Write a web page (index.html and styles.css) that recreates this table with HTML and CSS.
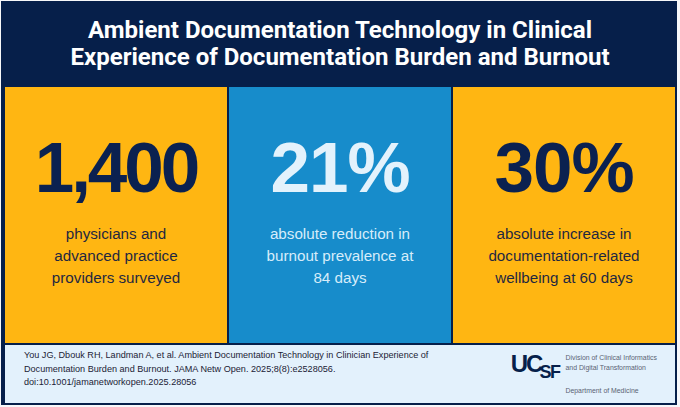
FILE: index.html
```html
<!DOCTYPE html>
<html lang="en">
<head>
<meta charset="utf-8">
<title>Ambient Documentation Technology</title>
<link rel="stylesheet" href="styles.css">
</head>
<body>
<div class="frame">
  <header class="header">
    <h1 class="title">Ambient Documentation Technology in Clinical<br>Experience of Documentation Burden and Burnout</h1>
  </header>
  <section class="panels">
    <div class="panel panel-gold">
      <div class="stat stat-tight">1,400</div>
      <p class="desc">physicians and<br>advanced practice<br>providers surveyed</p>
    </div>
    <div class="panel panel-blue">
      <div class="stat">21%</div>
      <p class="desc">absolute reduction in<br>burnout prevalence at<br>84 days</p>
    </div>
    <div class="panel panel-gold">
      <div class="stat">30%</div>
      <p class="desc">absolute increase in<br>documentation-related<br>wellbeing at 60 days</p>
    </div>
  </section>
  <footer class="footer">
    <p class="cite">You JG, Dbouk RH, Landman A, et al. Ambient Documentation Technology in Clinician Experience of<br>Documentation Burden and Burnout. JAMA Netw Open. 2025;8(8):e2528056.<br>doi:10.1001/jamanetworkopen.2025.28056</p>
    <div class="brand">
      <div class="logo"><span class="logo-uc">UC</span><span class="logo-sf">SF</span></div>
      <div class="brand-text">
        <span class="brand-line">Division of Clinical Informatics</span>
        <span class="brand-line">and Digital Transformation</span>
        <span class="brand-dept">Department of Medicine</span>
      </div>
    </div>
  </footer>
</div>
</body>
</html>
```

FILE: styles.css
```css
html, body {
  margin: 0;
  padding: 0;
  background: #f7f8fa;
}

body {
  width: 680px;
  height: 407px;
  overflow: hidden;
}

.frame {
  margin: 1px 0 0 1px;
  width: 676px;
  height: 404px;
  box-sizing: border-box;
  background: #061f4a;
  padding: 0 2px 2px 4px;
  display: flex;
  flex-direction: column;
}

.header {
  height: 86px;
  display: flex;
  align-items: center;
  justify-content: center;
}

.title {
  margin: 0;
  color: #ffffff;
  font-family: Roboto, "Liberation Sans", sans-serif;
  font-weight: 700;
  font-size: 24px;
  line-height: 27px;
  text-align: center;
}

.panels {
  height: 256px;
  display: grid;
  grid-template-columns: repeat(3, 1fr);
  gap: 2px;
}

.panel {
  display: flex;
  flex-direction: column;
  align-items: center;
  justify-content: center;
  padding-bottom: 9px;
  box-sizing: border-box;
  font-family: "Liberation Sans", Arial, sans-serif;
}

.panel-gold {
  background: #ffb612;
  color: #0b2150;
}

.panel-blue {
  background: #178ccb;
  color: #e3f2fc;
}

.stat {
  font-weight: 700;
  font-size: 71px;
  line-height: 70px;
  letter-spacing: -1px;
}

.stat-tight {
  letter-spacing: -3px;
}

.desc {
  margin: 20px 0 0;
  font-size: 15.2px;
  line-height: 22px;
  text-align: center;
}

.panel-gold .desc {
  color: #1f2840;
}

.panel-blue .desc {
  color: #d6ecfa;
}

.footer {
  margin-top: 2px;
  flex: 1;
  background: #e3f1fc;
  display: flex;
  align-items: center;
  justify-content: space-between;
  padding: 0 18px 0 19px;
  font-family: "Liberation Sans", Arial, sans-serif;
}

.cite {
  margin: 0 0 9px;
  font-size: 9.1px;
  line-height: 13.5px;
  color: #1b2235;
}

.brand {
  display: flex;
  align-items: flex-start;
  gap: 6px;
  margin-bottom: 0;
}

.logo {
  color: #061f4a;
  white-space: nowrap;
  line-height: 20px;
  height: 26px;
  padding-top: 1px;
}

.logo-uc {
  font-size: 24px;
  letter-spacing: -2px;
  font-weight: 700;
}

.logo-sf {
  font-size: 18px;
  font-weight: 700;
  letter-spacing: -1.5px;
  margin-left: -2px;
  vertical-align: -6px;
}

.brand-text {
  display: flex;
  flex-direction: column;
  padding-top: 0;
}

.brand-line {
  font-size: 6.9px;
  line-height: 9.5px;
  color: #5a6273;
}

.brand-dept {
  margin-top: 14px;
  font-size: 6.9px;
  line-height: 9px;
  color: #5a6273;
}
```
